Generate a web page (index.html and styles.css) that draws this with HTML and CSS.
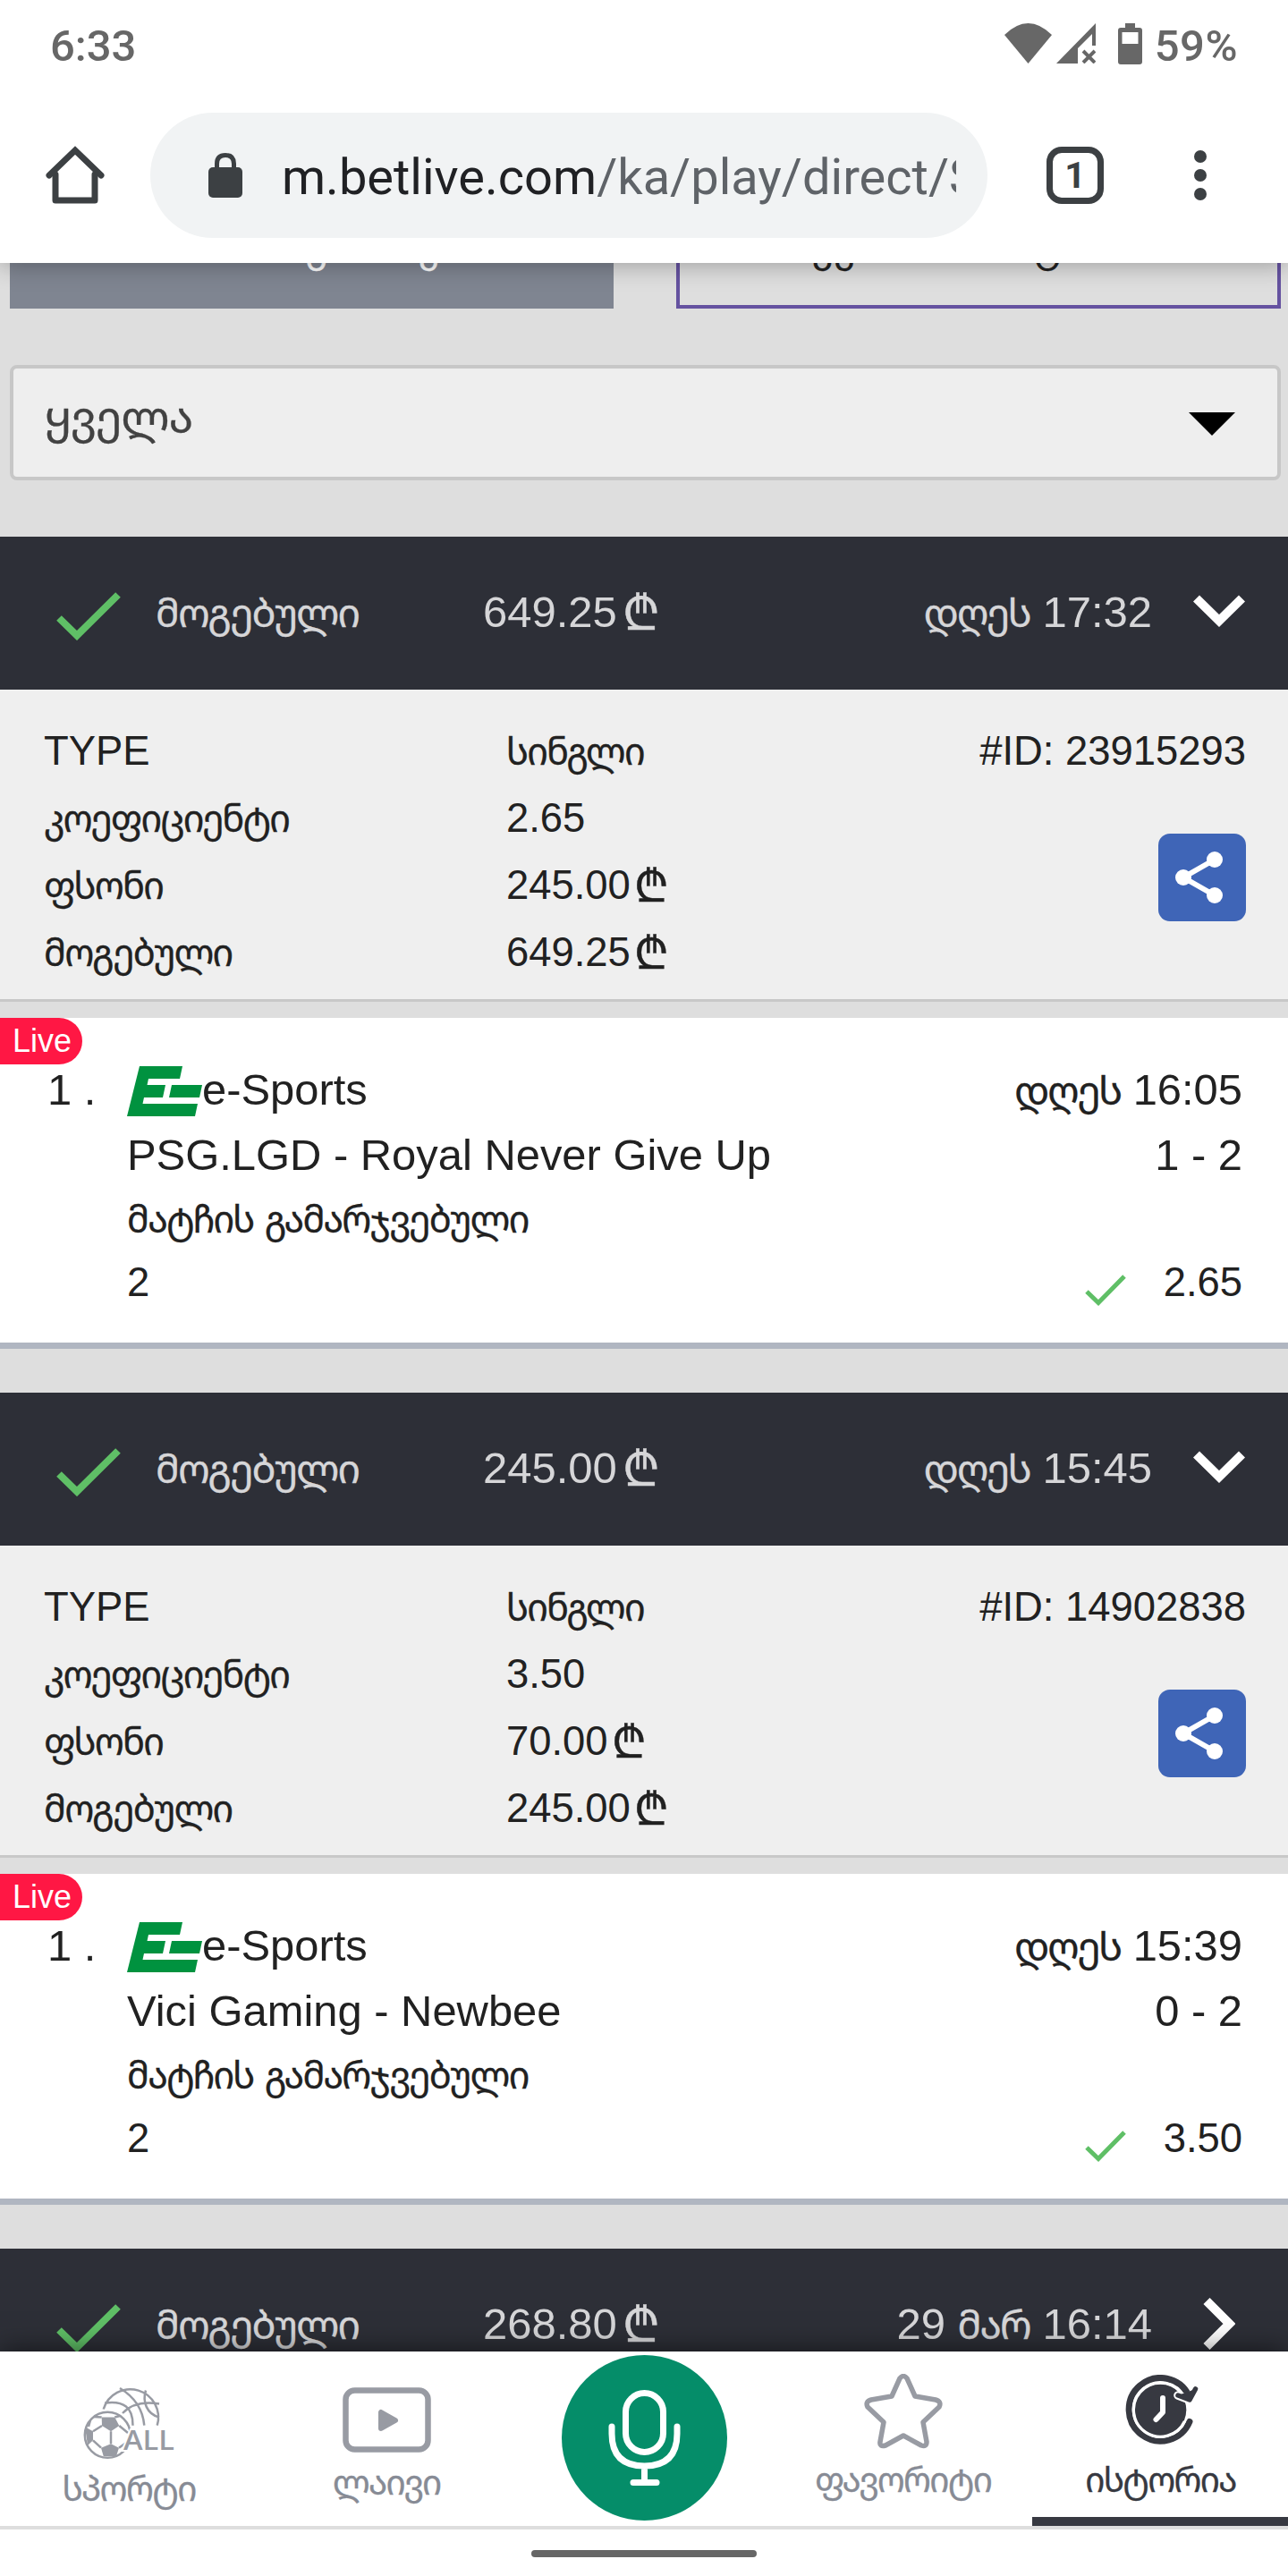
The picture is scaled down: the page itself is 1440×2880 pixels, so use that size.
FILE: index.html
```html
<!DOCTYPE html>
<html lang="ka">
<head>
    <meta charset="UTF-8">
    <meta name="viewport" content="width=device-width, initial-scale=1.0">
    <title>Betlive</title>
    <link rel="stylesheet" href="styles.css">
</head>
<body>
    <!-- shared icons -->
    <svg class="sprite">
        <symbol id="check" viewBox="0 0 72 54"><path d="M3 29L23 48.500L69 3" fill="none" stroke="#5fbf66" stroke-width="8"/></symbol>
        <symbol id="check-thin" viewBox="0 0 46 35"><path d="M2 19L15 31.500L44 2" fill="none" stroke="#5fbf66" stroke-width="5"/></symbol>
        <symbol id="down" viewBox="0 0 58 36"><path d="M3.500 4L29 29L54.500 4" fill="none" stroke="#fff" stroke-width="10"/></symbol>
        <symbol id="right" viewBox="0 0 36 58"><path d="M4 3.500L29.500 29L4 54.500" fill="none" stroke="#fff" stroke-width="10"/></symbol>
        <symbol id="share" viewBox="0 0 98 98">
            <path d="M63 29L28 49L63 69" fill="none" stroke="#fff" stroke-width="6"/>
            <circle cx="63" cy="29" r="9" fill="#fff"/><circle cx="28" cy="49" r="9" fill="#fff"/><circle cx="63" cy="69" r="9" fill="#fff"/>
        </symbol>
        <symbol id="esport" viewBox="0 0 84 56">
            <path d="M14 0H62L59 14H24L22.500 21H43L40 35H19L17.500 42H79L76 56H0Z" fill="#00923f"/>
            <path d="M50 21H84L81 35H47Z" fill="#00923f"/>
        </symbol>
    </svg>

    <div class="status-bar">
        <span>6:33</span>
        <div class="status-icons">
            <svg class="wifi" width="53" height="45" viewBox="0 0 53 45"><path d="M0 13Q26.500 -13 53 13L26.500 45Z" fill="#676767"/></svg>
            <svg class="signal" width="44" height="45" viewBox="0 0 44 45" fill="#676767"><path d="M44 0V25H40V12L24 28V45H0Z"/><path d="M30 31L43 44M43 31L30 44" stroke="#676767" stroke-width="4"/></svg>
            <svg class="battery" width="27" height="46" viewBox="0 0 27 46"><path fill-rule="evenodd" fill="#676767" d="M8 0H19V5H24Q27 5 27 8V43Q27 46 24 46H3Q0 46 0 43V8Q0 5 3 5H8ZM4.500 10V23H22.500V10Z"/></svg>
            <span>59%</span>
        </div>
    </div>

    <div class="browser-bar">
        <svg class="home" width="66" height="66" viewBox="0 0 66 66" fill="none" stroke="#3c4043" stroke-width="7" stroke-linejoin="round" stroke-linecap="round"><path d="M11 32V61H55V32"/><path d="M4 33L33 5L62 33" stroke-linejoin="miter"/></svg>
        <div class="address">
            <svg width="38" height="50" viewBox="0 0 38 50"><rect y="16" width="38" height="34" rx="5" fill="#3c4043"/><path d="M9.500 18V12Q9.500 2.500 19 2.500T28.500 12V18" fill="none" stroke="#3c4043" stroke-width="5"/></svg>
            <div class="url">m.betlive.com<span>/ka/play/direct/S</span></div>
        </div>
        <div class="tab-count">1</div>
        <div class="dots"><i></i><i></i><i></i></div>
    </div>

    <div class="content">
        <div class="tabs">
            <div class="tab tab-active"><span class="ka">ანგარიშები</span></div>
            <div class="tab tab-outline"><span class="ka">კუპონის ისტორია</span></div>
        </div>
        <div class="select"><span class="ka">ყველა</span><svg width="52" height="26" viewBox="0 0 52 26"><path d="M0 0H52L26 26Z"/></svg></div>

        <div class="bet">
            <div class="bet-head">
                <svg class="won"><use href="#check"/></svg>
                <div class="state"><span class="ka">მოგებული</span></div>
                <div class="sum">649.25<span class="gel">₾</span></div>
                <div class="date"><span class="ka">დღეს</span> 17:32</div>
                <svg class="arrow"><use href="#down"/></svg>
            </div>
            <div class="details">
                <div class="labels">
                    <p>TYPE</p>
                    <p><span class="ka">კოეფიციენტი</span></p>
                    <p><span class="ka">ფსონი</span></p>
                    <p><span class="ka">მოგებული</span></p>
                </div>
                <div class="values">
                    <p><span class="ka">სინგლი</span></p>
                    <p>2.65</p>
                    <p>245.00<span class="gel">₾</span></p>
                    <p>649.25<span class="gel">₾</span></p>
                </div>
                <div class="ticket">
                    <p>#ID: 23915293</p>
                    <svg class="share"><use href="#share"/></svg>
                </div>
            </div>
            <div class="event">
                <span class="live">Live</span>
                <div class="row row-first"><span class="num">1 .</span><svg class="esport"><use href="#esport"/></svg><span>e-Sports</span><span class="end"><span class="ka">დღეს</span> 16:05</span></div>
                <div class="row row-teams"><span>PSG.LGD - Royal Never Give Up</span><span class="end">1 - 2</span></div>
                <div class="row small"><span class="ka">მატჩის გამარჯვებული</span></div>
                <div class="row small"><span>2</span><svg class="pick"><use href="#check-thin"/></svg><span>2.65</span></div>
            </div>
        </div>

        <div class="bet">
            <div class="bet-head">
                <svg class="won"><use href="#check"/></svg>
                <div class="state"><span class="ka">მოგებული</span></div>
                <div class="sum">245.00<span class="gel">₾</span></div>
                <div class="date"><span class="ka">დღეს</span> 15:45</div>
                <svg class="arrow"><use href="#down"/></svg>
            </div>
            <div class="details">
                <div class="labels">
                    <p>TYPE</p>
                    <p><span class="ka">კოეფიციენტი</span></p>
                    <p><span class="ka">ფსონი</span></p>
                    <p><span class="ka">მოგებული</span></p>
                </div>
                <div class="values">
                    <p><span class="ka">სინგლი</span></p>
                    <p>3.50</p>
                    <p>70.00<span class="gel">₾</span></p>
                    <p>245.00<span class="gel">₾</span></p>
                </div>
                <div class="ticket">
                    <p>#ID: 14902838</p>
                    <svg class="share"><use href="#share"/></svg>
                </div>
            </div>
            <div class="event">
                <span class="live">Live</span>
                <div class="row row-first"><span class="num">1 .</span><svg class="esport"><use href="#esport"/></svg><span>e-Sports</span><span class="end"><span class="ka">დღეს</span> 15:39</span></div>
                <div class="row row-teams"><span>Vici Gaming - Newbee</span><span class="end">0 - 2</span></div>
                <div class="row small"><span class="ka">მატჩის გამარჯვებული</span></div>
                <div class="row small"><span>2</span><svg class="pick"><use href="#check-thin"/></svg><span>3.50</span></div>
            </div>
        </div>

        <div class="bet">
            <div class="bet-head">
                <svg class="won"><use href="#check"/></svg>
                <div class="state"><span class="ka">მოგებული</span></div>
                <div class="sum">268.80<span class="gel">₾</span></div>
                <div class="date">29 <span class="ka">მარ</span> 16:14</div>
                <svg class="arrow arrow-right"><use href="#right"/></svg>
            </div>
        </div>
    </div>

    <div class="nav">
        <div class="nav-item nav-sport">
            <svg width="102" height="86" viewBox="0 0 102 86" fill="none" stroke="#989ba3" stroke-width="2.500">
                <path d="M22.700 28.500A31 31 0 1 1 82.700 46.700"/>
                <path d="M41 5Q66 20 68.300 46.700M24.300 21.500Q56 17 55.500 46.700M44 33Q58 18 85 22.500M70 7.500C66 20 71 34 85 37.500"/>
                <circle cx="27.300" cy="57.300" r="28.500" fill="#fff" stroke="none"/>
                <circle cx="27.300" cy="57.300" r="25.500"/>
                <path d="M20.700 37.500H35.300L40.300 47L31 53.300L21 47ZM31 67.300L40 71.700L37 81H22.700L20 71.700ZM2 48.300L11 53.300V63.300L5 69Z" fill="#989ba3" stroke="none"/>
                <path d="M21 47L11 53.300M31 53.300V67.300M40.300 47L50 55M20 71.700L11 63.300M40 71.700L48 66M20.700 37.500L12 37M35.300 37.500L41 36M6 48L8 41"/>
                <text x="45" y="74" font-family="Open Sans, sans-serif" font-weight="600" font-size="31" textLength="57" lengthAdjust="spacingAndGlyphs" fill="#989ba3" stroke="#fff" stroke-width="4" paint-order="stroke">ALL</text>
            </svg>
            <p><span class="ka">სპორტი</span></p>
        </div>
        <div class="nav-item nav-live">
            <svg width="100" height="74" viewBox="0 0 100 74"><rect x="4.500" y="3.500" width="92" height="66" rx="10" fill="none" stroke="#989ba3" stroke-width="6.500"/><path d="M44 28V46L60 37Z" fill="#989ba3" stroke="#989ba3" stroke-width="6" stroke-linejoin="round"/></svg>
            <p><span class="ka">ლაივი</span></p>
        </div>
        <div class="nav-item nav-mic">
            <svg width="185" height="185" viewBox="0 0 185 185" fill="none" stroke="#fff" stroke-width="7" stroke-linecap="round">
                <circle cx="92.500" cy="92.500" r="92.500" fill="#058d69" stroke="none"/>
                <rect x="71.500" y="42.500" width="42" height="66" rx="21"/>
                <path d="M56 80V88Q56 124 92.500 124Q129 124 129 88V80M92.500 124V140M80 142.500H106"/>
            </svg>
        </div>
        <div class="nav-item nav-fav">
            <svg width="88" height="84" viewBox="0 0 88 84" fill="none" stroke="#989ba3" stroke-width="5.500" stroke-linejoin="round"><path d="M40 5Q44 0 48 5L57 25L80 29Q87 31 84 37L66 54L70 76Q70 82 64 80L44 69L24 80Q17 82 18 76L22 54L4 37Q1 31 8 29L31 25Z"/></svg>
            <p><span class="ka">ფავორიტი</span></p>
        </div>
        <div class="nav-item nav-history">
            <svg width="83" height="80" viewBox="0 0 83 80">
                <circle cx="39.300" cy="39.300" r="29" fill="#373941"/>
                <path d="M71 23A35.300 35.300 0 1 0 72 52.500" fill="none" stroke="#373941" stroke-width="7" stroke-linecap="round"/>
                <path d="M62 19.500A30 30 0 1 0 66.500 52" fill="none" stroke="#fff" stroke-width="3.300"/>
                <path d="M59 23L72 28L78.500 16" fill="#373941" stroke="#fff" stroke-width="9.500" stroke-linecap="round" stroke-linejoin="round"/>
                <path d="M66 16L71 23M59 23L72 28L78.500 16" fill="#373941" stroke="#373941" stroke-width="5.500" stroke-linecap="round" stroke-linejoin="round"/>
                <path d="M42 26V42L34.500 50" fill="none" stroke="#fff" stroke-width="6" stroke-linecap="round" stroke-linejoin="round"/>
            </svg>
            <p><span class="ka">ისტორია</span></p>
        </div>
    </div>
    <div class="gesture"><i></i></div>
</body>
</html>
```

FILE: styles.css
```css
* {
    padding: 0;
    margin: 0;
    box-sizing: border-box;
}
body {
    width: 1440px;
    height: 2880px;
    overflow: hidden;
    display: flex;
    flex-direction: column;
    background-color: #dedede;
    font-family: "Liberation Sans", Arial, sans-serif;
    color: #212121;
}
svg {
    display: block;
    flex-shrink: 0;
}
.sprite {
    position: absolute;
    width: 0;
    height: 0;
}
.ka {
    font-family: "Noto Sans Georgian", "DejaVu Sans Condensed", "DejaVu Sans", sans-serif;
    font-size: 0.91em;
    line-height: 0;
    letter-spacing: -0.045em;
    word-spacing: 0.08em;
    -webkit-text-stroke: 0.3px currentColor;
}
.gel {
    display: inline-block;
    margin-left: 4px;
    font-size: 1.1em;
    line-height: 0;
    vertical-align: -3px;
    -webkit-text-stroke: 0.4px currentColor;
}

/* phone status bar */
.status-bar {
    height: 104px;
    flex-shrink: 0;
    display: flex;
    justify-content: space-between;
    padding: 0 56px 0 56px;
    background-color: #fff;
    color: #676767;
    font: 500 49px/104px Roboto, sans-serif;
    z-index: 3;
}
.status-icons {
    display: flex;
}
.status-icons span {
    letter-spacing: 0.5px;
}
.status-icons svg {
    margin-top: 26px;
}
.signal {
    margin-left: 5px;
}
.battery {
    margin: 0 14px 0 25px;
}

/* browser bar */
.browser-bar {
    height: 190px;
    flex-shrink: 0;
    display: flex;
    align-items: center;
    padding-bottom: 6px;
    background-color: #fff;
    box-shadow: 0 2px 26px rgba(0,0,0,0.3);
    z-index: 2;
}
.home {
    margin: 0 51px;
}
.address {
    width: 936px;
    height: 140px;
    border-radius: 70px;
    background-color: #f1f3f4;
    display: flex;
    align-items: center;
    padding: 0 35px 0 65px;
}
.address svg {
    margin-right: 44px;
}
.url {
    width: 754px;
    flex-shrink: 0;
    overflow: hidden;
    white-space: nowrap;
    font: 56px/80px Roboto, sans-serif;
    padding-top: 3px;
    color: #202124;
}
.url span {
    color: #5f6368;
}
.tab-count {
    width: 64px;
    height: 64px;
    margin: 0 101px 0 66px;
    border: 7px solid #3c4043;
    border-radius: 17px;
    text-align: center;
    font: bold 41px/50px Roboto, sans-serif;
    color: #3c4043;
}
.dots {
    display: flex;
    flex-direction: column;
    gap: 7px;
}
.dots i {
    width: 14px;
    height: 14px;
    border-radius: 50%;
    background-color: #3c4043;
}

.content {
    height: 2335px;
    flex-shrink: 0;
    overflow: hidden;
}
.tabs {
    display: flex;
    justify-content: space-between;
    height: 51px;
    padding: 0 8px 0 11px;
}
.tab {
    height: 51px;
    font-size: 45px;
    line-height: 32px;
    white-space: nowrap;
}
.tab .ka {
    display: block;
    margin-top: -33px;
    line-height: 32px;
    letter-spacing: 0;
}
.tab-active {
    width: 675px;
    background-color: #7f8591;
    color: #fff;
    padding-left: 284px;
}
.tab-outline {
    width: 676px;
    border: 4px solid #6552a0;
    border-top: 0;
    padding-left: 148px;
}
.tab-outline .ka {
    letter-spacing: 0.02em;
}
.select {
    height: 129px;
    margin: 63px 8px 63px 11px;
    padding: 3px 47px 0 35px;
    border: 4px solid #c7c7c7;
    border-radius: 8px;
    background-color: #eee;
    display: flex;
    align-items: center;
    justify-content: space-between;
    font-size: 55px;
    color: #424242;
}
.select .ka {
    padding-bottom: 18px;
    letter-spacing: -0.02em;
}

/* bet header */
.bet-head {
    height: 171px;
    display: flex;
    align-items: center;
    background-color: #2d2f37;
    color: #d6d6d8;
    font-size: 49px;
    padding: 0 48px 4px 63px;
    line-height: 164px;
}
.won {
    width: 72px;
    height: 54px;
    margin: 10px 39px 0 0;
}
.state {
    width: 366px;
}
.sum {
    width: 300px;
}
.sum .gel {
    margin-left: 6px;
}
.date {
    flex: 1;
    text-align: right;
}
.arrow {
    width: 58px;
    height: 36px;
    margin: 0 0 2px 46px;
}
.arrow-right {
    width: 36px;
    height: 58px;
    margin: 0 11px 0 57px;
}
.details {
    height: 349px;
    display: flex;
    padding: 31px 47px 0 49px;
    background-color: #efefef;
    border-bottom: 3px solid #c8c8c8;
    font-size: 45.400px;
    line-height: 75px;
}
.labels {
    width: 517px;
}
.values {
    width: 400px;
}
.ticket {
    flex: 1;
    display: flex;
    flex-direction: column;
    align-items: flex-end;
    white-space: nowrap;
}
.share {
    width: 98px;
    height: 98px;
    margin-top: 55px;
    border-radius: 13px;
    background-color: #3f65b7;
}
.event {
    position: relative;
    height: 370px;
    margin: 18px 0 49px;
    padding: 44px 51px 0 142px;
    background-color: #fff;
    border-bottom: 7px solid #b0b6c1;
}
.live {
    position: absolute;
    left: 0;
    top: 0;
    width: 92px;
    height: 52px;
    padding-left: 14px;
    border-radius: 0 26px 26px 0;
    background-color: #ff1744;
    color: #fff;
    font-size: 36px;
    line-height: 51px;
}
.row {
    display: flex;
    height: 72px;
    font-size: 48.900px;
    line-height: 72px;
}
.row .ka {
    line-height: inherit;
}
.row-first {
    margin-left: -89px;
    height: 73px;
}
.num {
    width: 89px;
}
.row-teams {
    height: 71px;
}
.small {
    font-size: 45.400px;
}
.esport {
    width: 84px;
    height: 56px;
    margin-top: 10px;
}
.end {
    margin-left: auto;
}
.pick {
    width: 46px;
    height: 35px;
    margin: 27px 42px 0 auto;
}

/* bottom menu */
.nav {
    height: 199px;
    flex-shrink: 0;
    display: grid;
    grid-template-columns: repeat(5, 1fr);
    background-color: #fff;
    border-bottom: 4px solid #dedede;
    box-shadow: 0 0 30px rgba(0,0,0,0.6);
    z-index: 2;
    color: #878b95;
    font-size: 42.500px;
    line-height: 50px;
}
.nav-item {
    display: flex;
    flex-direction: column;
    align-items: center;
}
.nav-sport {
    padding-top: 36px;
}
.nav-sport p {
    margin-top: 6px;
}
.nav-live {
    padding-top: 40px;
}
.nav-live p {
    margin-top: 7px;
}
.nav-mic {
    padding-top: 4px;
}
.nav-fav {
    padding: 25px 0 0 3px;
}
.nav-fav p {
    margin-top: 9px;
}
.nav-history {
    padding: 26px 0 0 5px;
    border-bottom: 10px solid #373941;
    color: #373941;
    margin-left: 2px;
}
.nav-history p {
    margin: 12px 4px 0 0;
}
.gesture {
    flex: 1;
    background-color: #fff;
    z-index: 3;
}
.gesture i {
    display: block;
    width: 252px;
    height: 8px;
    margin: 23px auto 0;
    border-radius: 4px;
    background-color: #666;
}
```
